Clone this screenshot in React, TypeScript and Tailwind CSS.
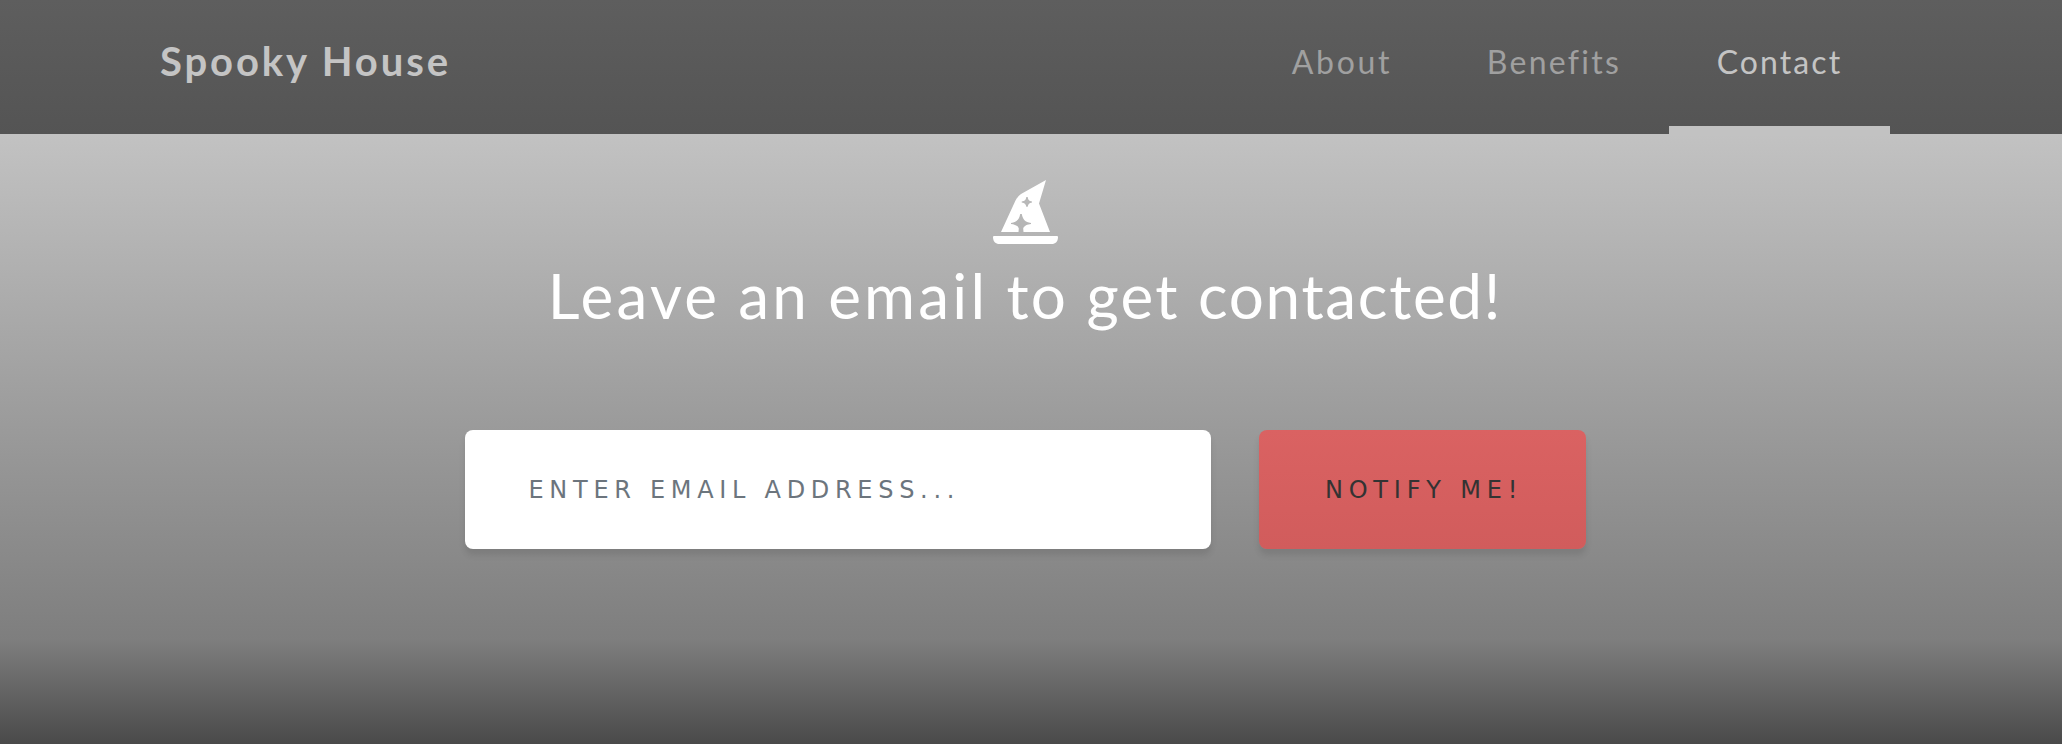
const links = [
  { label: "About", style: "w-[194px] tracking-[2.7px] text-[#a0a0a0]" },
  { label: "Benefits", style: "w-[230px] tracking-[2.3px] text-[#a0a0a0]" },
  { label: "Contact", style: "w-[221px] tracking-[2.1px] text-[#c4c4c4]" },
];

function WizardHat() {
  return (
    <svg className="ml-[2px] h-16 w-[66px]" viewBox="0 0 66 64" fill="white">
      <path
        fillRule="evenodd"
        d="M53 0L46 23.5L57 52H30.5L30.2 48.6C31 45.5 34.5 44.5 38 44V43C32 42 29.8 39.5 28.8 34H27.2C26.2 39.5 24 42 18 43V44C21.5 44.5 25 45.5 25.8 48.6L25.5 52H8L22.5 20.5Q24.5 16.3 28 14Z M33.3 17C32.8 20.2 31.7 21.1 28.7 21.5V22.4C31.7 22.8 32.8 23.8 33.3 26.8H34.7C35.2 23.8 36.3 22.8 39 22.4V21.5C36.3 21.1 35.2 20.2 34.7 17Z"
      />
      <path d="M0 57Q0 56 1 56H64Q65 56 65 57C65 61.5 62.5 64 58.5 64H6.5C2.5 64 0 61.5 0 57Z" />
    </svg>
  );
}

export default function App() {
  return (
    <div className="flex h-[744px] w-full flex-col bg-[linear-gradient(to_bottom,#d3d3d3_0px,#c2c2c2_134px,#7e7e7e_640px,#4a4a4a_744px)] font-['Lato',sans-serif]">
      <nav className="flex h-[134px] items-stretch justify-between bg-[linear-gradient(to_bottom,#5e5e5e,#545454)] pr-[172px] pl-40">
        <a className="flex h-[122px] items-center text-[40px] font-bold tracking-[2.9px] text-[#c4c4c4]">Spooky House</a>
        <div className="flex">
          {links.map((link) => (
            <a key={link.label} className="flex flex-col justify-between">
              <span className={`flex h-[124px] items-center justify-center text-[32px] ${link.style}`}>{link.label}</span>
              {link.label === "Contact" && <span className="h-2 bg-[#c2c2c2]" />}
            </a>
          ))}
        </div>
      </nav>
      <main className="flex flex-col items-center pr-[12px] pt-[46px]">
        <WizardHat />
        <h1 className="mt-[13px] h-[77px] text-[62px] leading-[77px] tracking-[2.3px] whitespace-nowrap text-white">
          <span className="tracking-[3.2px]">Leave</span> <span className="tracking-[3.1px]">an</span>{" "}
          <span className="tracking-[3.2px]">email</span> to get <span className="tracking-[1.7px]">contacted!</span>
        </h1>
        <form className="mt-[96px] flex gap-12" onSubmit={(e) => e.preventDefault()}>
          <input
            type="email"
            placeholder="ENTER EMAIL ADDRESS..."
            className="h-[119px] w-[746px] rounded-lg bg-white px-16 font-['DejaVu_Sans',sans-serif] text-2xl tracking-[5.7px] shadow-[0_6px_6px_rgba(0,0,0,0.1)] outline-none placeholder:text-[#6c757d]"
          />
          <button className="h-[119px] w-[327px] rounded-lg bg-[linear-gradient(to_bottom,#da6262,#d15c5c)] pl-1 font-['DejaVu_Sans',sans-serif] text-2xl tracking-[5.8px] text-[#333] shadow-[0_6px_6px_rgba(0,0,0,0.1)]">
            NOTIFY ME!
          </button>
        </form>
      </main>
    </div>
  );
}
